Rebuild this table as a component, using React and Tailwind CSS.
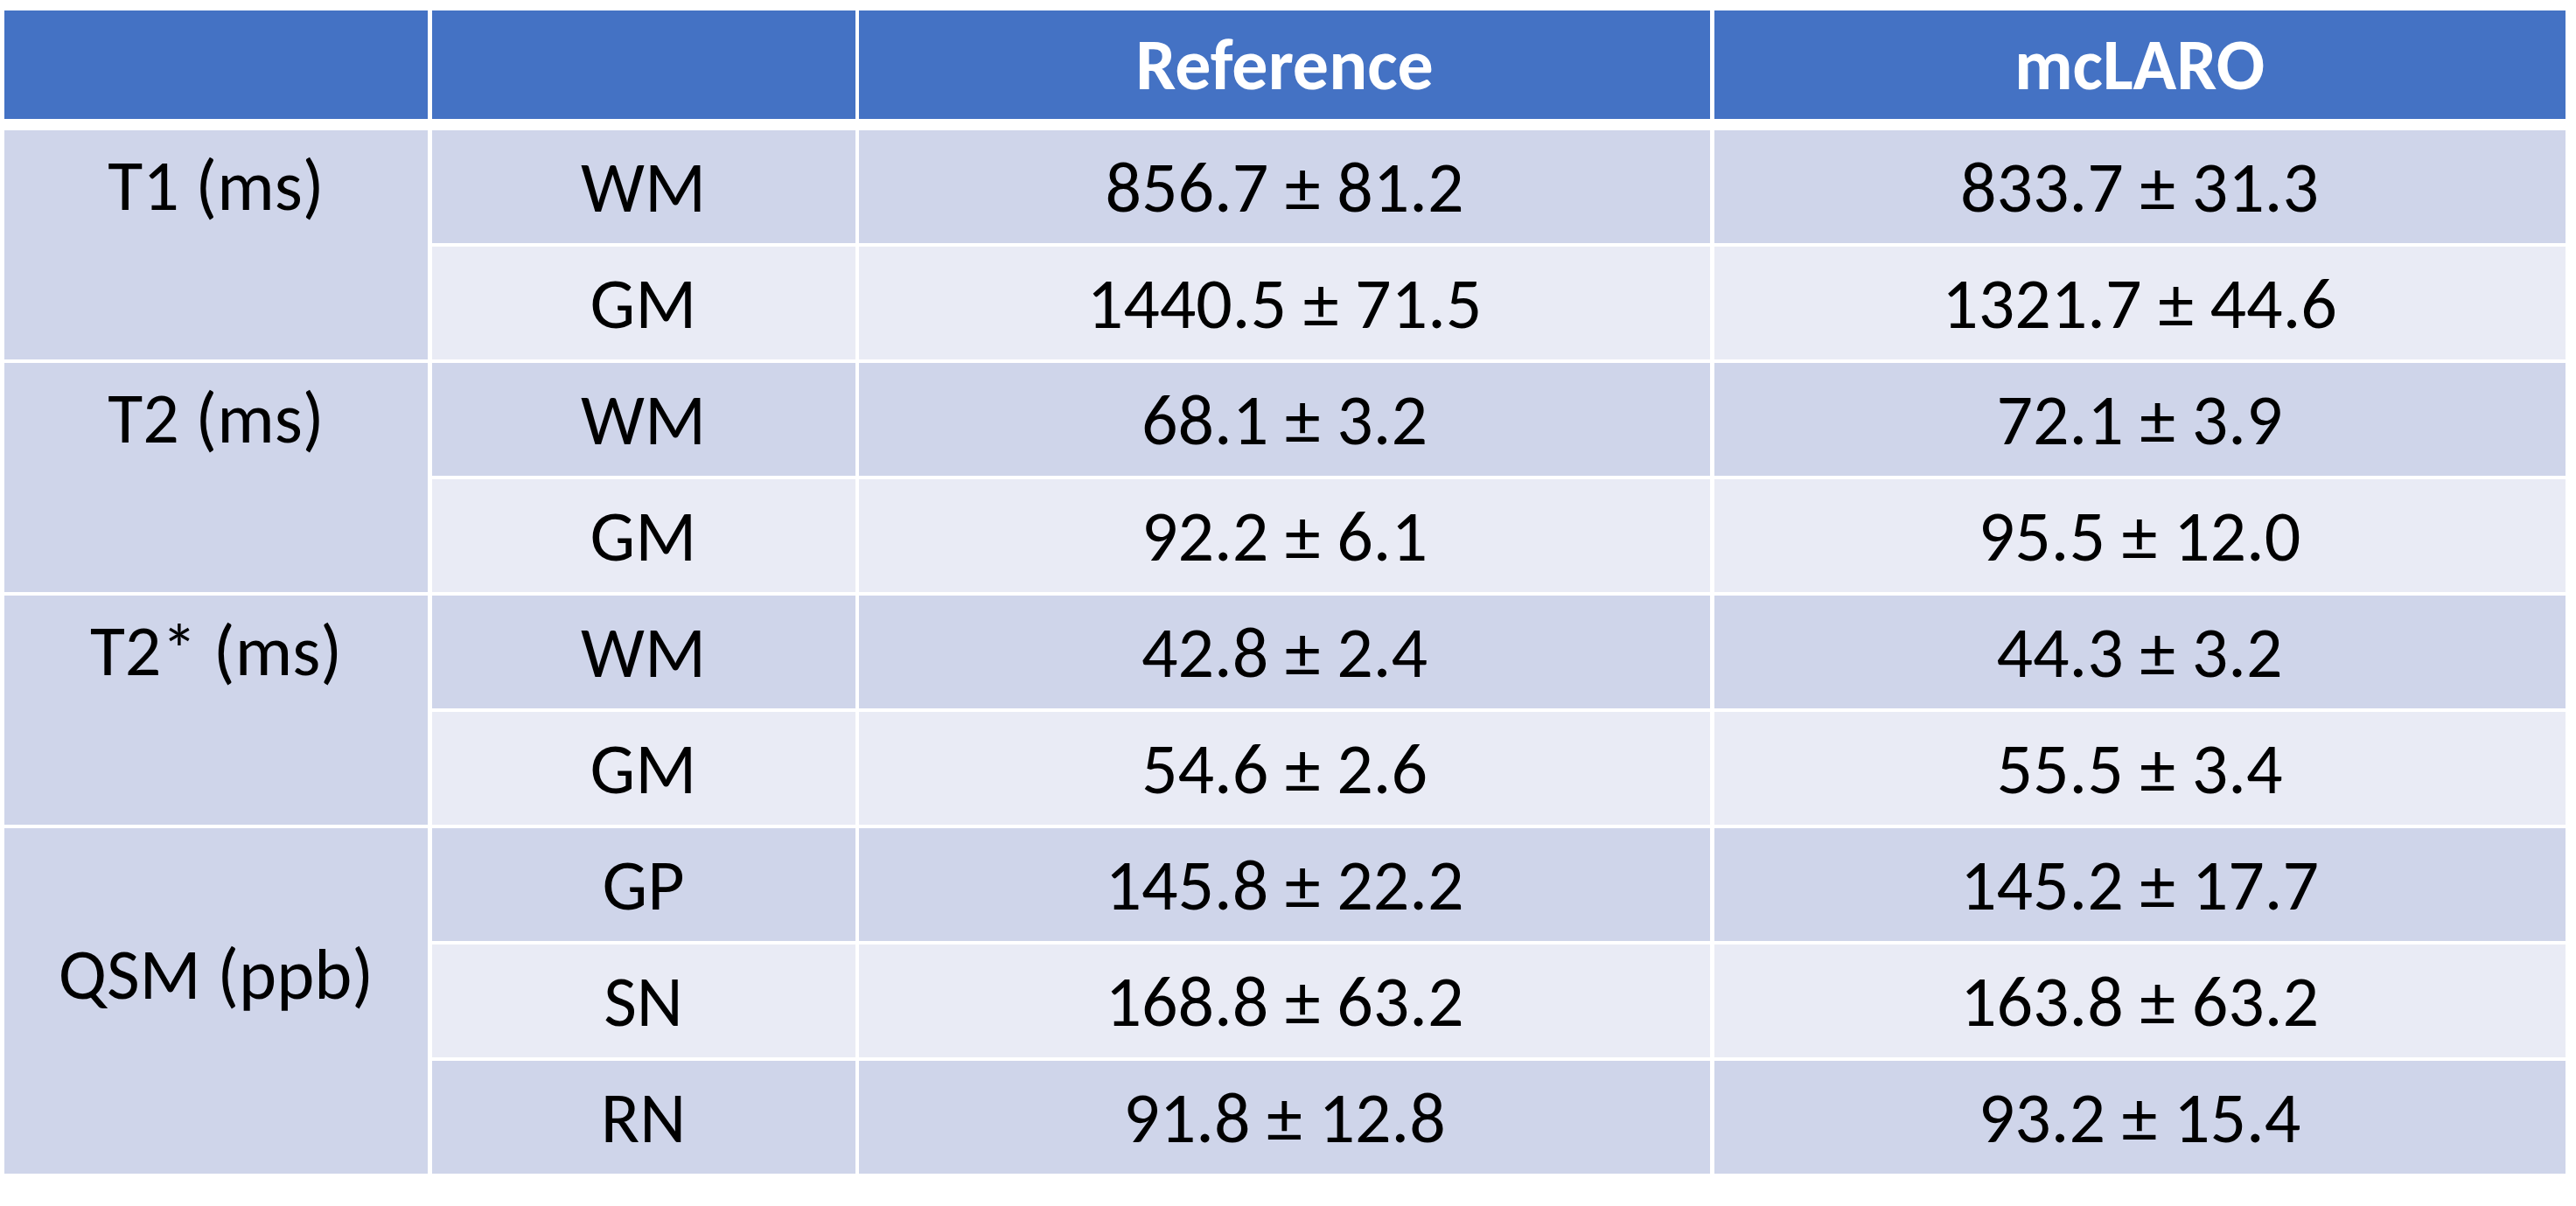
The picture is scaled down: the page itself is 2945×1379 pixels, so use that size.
import React from 'react'

// Relaxometry / QSM values per region
const groups = [
  {
    label: 'T1 (ms)',
    span: 'row-span-2',
    pad: 'pt-[11px]',
    rows: [
      { region: 'WM', ref: '856.7 ± 81.2', mc: '833.7 ± 31.3' },
      { region: 'GM', ref: '1440.5 ± 71.5', mc: '1321.7 ± 44.6' },
    ],
  },
  {
    label: 'T2 (ms)',
    span: 'row-span-2',
    pad: 'pt-[11px]',
    rows: [
      { region: 'WM', ref: '68.1 ± 3.2', mc: '72.1 ± 3.9' },
      { region: 'GM', ref: '92.2 ± 6.1', mc: '95.5 ± 12.0' },
    ],
  },
  {
    label: 'T2* (ms)',
    span: 'row-span-2',
    pad: 'pt-[11px]',
    rows: [
      { region: 'WM', ref: '42.8 ± 2.4', mc: '44.3 ± 3.2' },
      { region: 'GM', ref: '54.6 ± 2.6', mc: '55.5 ± 3.4' },
    ],
  },
  {
    label: 'QSM (ppb)',
    span: 'row-span-3',
    pad: 'pt-[115px]',
    rows: [
      { region: 'GP', ref: '145.8 ± 22.2', mc: '145.2 ± 17.7' },
      { region: 'SN', ref: '168.8 ± 63.2', mc: '163.8 ± 63.2' },
      { region: 'RN', ref: '91.8 ± 12.8', mc: '93.2 ± 15.4' },
    ],
  },
]

const cols = 'grid grid-cols-[484px_484px_973px_973px] gap-x-[4.5px]'

const App = () => {
  return (
    <div
      className="min-h-screen bg-white pl-[5px] pt-[12px] text-[82px] leading-[104px] text-black"
      style={{ fontFamily: 'Carlito, "Liberation Sans", Arial, sans-serif' }}
    >
      <div className={`${cols} mb-[13px] h-[124px]`}>
        <div className="bg-[#4472C4]" />
        <div className="bg-[#4472C4]" />
        <div className="flex items-center justify-center bg-[#4472C4] font-bold text-white">
          Reference
        </div>
        <div className="flex items-center justify-center bg-[#4472C4] font-bold text-white">
          mcLARO
        </div>
      </div>

      <div className={`${cols} grid-rows-[repeat(9,129px)] gap-y-[4px]`}>
        {groups.map((g) => (
          <React.Fragment key={g.label}>
            <div className={`col-start-1 ${g.span} ${g.pad} bg-[#CFD5EA] text-center`}>
              {g.label}
            </div>
            {g.rows.map((r, i) => {
              const bg = i % 2 === 0 ? 'bg-[#CFD5EA]' : 'bg-[#E9EBF5]'
              return (
                <React.Fragment key={r.region}>
                  <div className={`flex items-center justify-center ${bg}`}>{r.region}</div>
                  <div className={`flex items-center justify-center ${bg}`}>{r.ref}</div>
                  <div className={`flex items-center justify-center ${bg}`}>{r.mc}</div>
                </React.Fragment>
              )
            })}
          </React.Fragment>
        ))}
      </div>
    </div>
  )
}

export default App
